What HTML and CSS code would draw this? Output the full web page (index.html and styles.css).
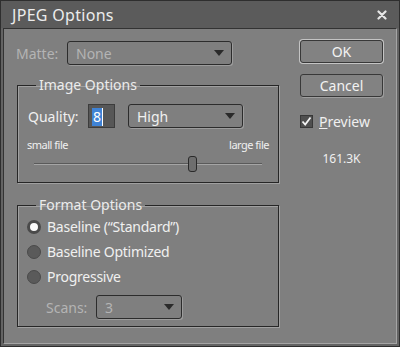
FILE: index.html
```html
<!DOCTYPE html>
<html lang="en">
<head>
    <meta charset="UTF-8">
    <title>JPEG Options</title>
    <link rel="stylesheet" href="styles.css">
</head>
<body>
    <div class="window">
        <div class="titlebar">
            <span class="title">JPEG Options</span>
            <svg class="close" width="10" height="10" viewBox="0 0 10 10">
                <path d="M1.5 1.5 L8.5 8.5 M8.5 1.5 L1.5 8.5" stroke="#e6e6e6" stroke-width="2.2" stroke-linecap="round"/>
            </svg>
        </div>

        <div class="panel">
            <div class="left">
                <div class="matte-row">
                    <span class="label dim matte-label">Matte:</span>
                    <div class="select matte-select dim">
                        <span>None</span>
                        <span class="arrow"></span>
                    </div>
                </div>

                <fieldset class="group image-group">
                    <legend>Image Options</legend>
                    <div class="group-body">
                        <div class="quality-row">
                            <span class="label quality-label">Quality:</span>
                            <div class="quality-input"><span class="sel">8</span></div>
                            <div class="select quality-select">
                                <span>High</span>
                                <span class="arrow"></span>
                            </div>
                        </div>
                        <div class="size-row">
                            <span>small file</span>
                            <span>large file</span>
                        </div>
                        <div class="slider">
                            <div class="track"></div>
                            <div class="thumb" style="left: 154px;"></div>
                        </div>
                    </div>
                </fieldset>

                <fieldset class="group format-group">
                    <legend>Format Options</legend>
                    <div class="group-body">
                        <div class="radio-row">
                            <span class="radio on"></span>
                            <span>Baseline (“Standard”)</span>
                        </div>
                        <div class="radio-row">
                            <span class="radio"></span>
                            <span>Baseline Optimized</span>
                        </div>
                        <div class="radio-row">
                            <span class="radio"></span>
                            <span>Progressive</span>
                        </div>
                        <div class="scans-row">
                            <span class="label dim scans-label">Scans:</span>
                            <div class="select scans-select dim">
                                <span>3</span>
                                <span class="arrow"></span>
                            </div>
                        </div>
                    </div>
                </fieldset>
            </div>

            <div class="right">
                <button class="btn default">OK</button>
                <button class="btn">Cancel</button>
                <div class="preview">
                    <span class="checkbox">
                        <svg width="13" height="13" viewBox="0 0 13 13">
                            <path d="M2.5 6.5 L5.2 9.5 L10.5 2.5" fill="none" stroke="#f4f4f4" stroke-width="1.8"/>
                        </svg>
                    </span>
                    <span><u>P</u>review</span>
                </div>
                <div class="filesize">161.3K</div>
            </div>
        </div>
    </div>
</body>
</html>
```

FILE: styles.css
```css
body {
    margin: 0;
    background: #2b2b2b;
    font-family: "Noto Sans", "Open Sans", sans-serif;
    font-size: 14px;
    color: #f0f0f0;
}
.window {
    width: 400px;
    height: 347px;
    box-sizing: border-box;
    border: 1px solid #2e2e2e;
    background: #636363;
    display: flex;
    flex-direction: column;
}
.titlebar {
    height: 27px;
    display: flex;
    align-items: center;
    justify-content: space-between;
    padding: 0 12px 0 11px;
    background: #5b5b5b;
}
.title {
    font-size: 16px;
    letter-spacing: 0.3px;
    color: #ececec;
}
.close {
    margin-top: 1px;
}
.panel {
    flex: 1;
    margin: 0 2px 2px 2px;
    border-top: 1px solid #333;
    border-left: 1px solid #333;
    border-right: 1px solid #a4a4a4;
    border-bottom: 1px solid #a4a4a4;
    background: #7f7f7f;
    display: flex;
    padding: 12px 0 0 12px;
    gap: 21px;
}
.left {
    width: 263px;
}
.dim {
    color: #b4b4b4;
}
.matte-row {
    display: flex;
    align-items: center;
    height: 24px;
}
.matte-label {
    width: 51px;
}
.select {
    box-sizing: border-box;
    height: 24px;
    border: 1px solid #2c2c2c;
    border-radius: 3px;
    box-shadow: 1px 1px 0 #9c9c9c;
    display: flex;
    align-items: center;
    justify-content: space-between;
    padding: 0 7px 0 8px;
    background: #7f7f7f;
}
.arrow {
    width: 0;
    height: 0;
    border-left: 5px solid transparent;
    border-right: 5px solid transparent;
    border-top: 6px solid #2a2a2a;
}
.matte-select {
    width: 165px;
}
.group {
    margin: 11px 0 0 1px;
    padding: 0;
    width: 262px;
    box-sizing: border-box;
    border: 1px solid #262626;
    box-shadow: 1px 1px 0 #a0a0a0, inset 1px 1px 0 #a0a0a0;
}
.group legend {
    margin-left: 18px;
    padding: 0 3px;
    line-height: 18px;
    color: #ececec;
}
.image-group .group-body {
    padding: 10px 9px 10px 9px;
}
.quality-row {
    display: flex;
    align-items: center;
    height: 24px;
    padding-left: 1px;
}
.quality-label {
    width: 60px;
}
.quality-input {
    box-sizing: border-box;
    width: 27px;
    height: 24px;
    background: #575757;
    border: 1px solid #3c3c3c;
    padding: 2px 0 0 3px;
}
.sel {
    display: inline-block;
    background: #3f83d6;
    color: #fff;
    line-height: 18px;
    padding: 0 1px;
    border-right: 1px solid #fff;
}
.quality-select {
    width: 115px;
    margin-left: 13px;
}
.size-row {
    display: flex;
    justify-content: space-between;
    margin-top: 10px;
    font-size: 11px;
    letter-spacing: -0.5px;
    line-height: 13px;
    padding: 0 0 0 0;
}
.slider {
    position: relative;
    height: 16px;
    margin: 5px 7px 0 7px;
}
.track {
    position: relative;
    top: 7px;
    height: 1px;
    border-top: 1px solid #5a5a5a;
    background: #a5a5a5;
}
.thumb {
    position: absolute;
    top: 0;
    width: 9px;
    height: 16px;
    box-sizing: border-box;
    border: 1px solid #2a2a2a;
    border-radius: 3px;
    background: #6e6e6e;
}
.format-group {
    margin-top: 13px;
}
.format-group .group-body {
    padding: 0 9px 7px 9px;
}
.radio-row {
    display: flex;
    align-items: center;
    gap: 6px;
    height: 25px;
    letter-spacing: -0.25px;
}
.radio {
    width: 14px;
    height: 14px;
    box-sizing: border-box;
    border-radius: 50%;
    border: 1px solid #4a4a4a;
    background: #5a5a5a;
}
.radio.on {
    background: #fafafa;
    border: 3px solid #4a4a4a;
}
.scans-row {
    display: flex;
    align-items: center;
    height: 24px;
    margin-top: 6px;
    padding-left: 19px;
}
.scans-label {
    width: 50px;
}
.scans-select {
    width: 86px;
}
.right {
    width: 83px;
    display: flex;
    flex-direction: column;
}
.btn {
    font-family: inherit;
    font-size: 14px;
    color: #f2f2f2;
    height: 23px;
    padding: 0;
    border: 1px solid #383838;
    border-radius: 3px;
    background: #828282;
    box-shadow: 1px 1px 0 #9e9e9e;
}
.btn.default {
    margin-top: -1px;
    box-shadow: 0 0 0 1px #c4c4c4;
}
.btn + .btn {
    margin-top: 11px;
}
.preview {
    display: flex;
    align-items: center;
    gap: 6px;
    margin-top: 17px;
    height: 15px;
}
.checkbox {
    width: 13px;
    height: 13px;
    box-sizing: border-box;
    background: #4f4f4f;
    border: 1px solid #383838;
    display: flex;
}
.checkbox svg {
    margin: -1px;
}
.filesize {
    margin-top: 21px;
    text-align: center;
    font-size: 12px;
}
```
